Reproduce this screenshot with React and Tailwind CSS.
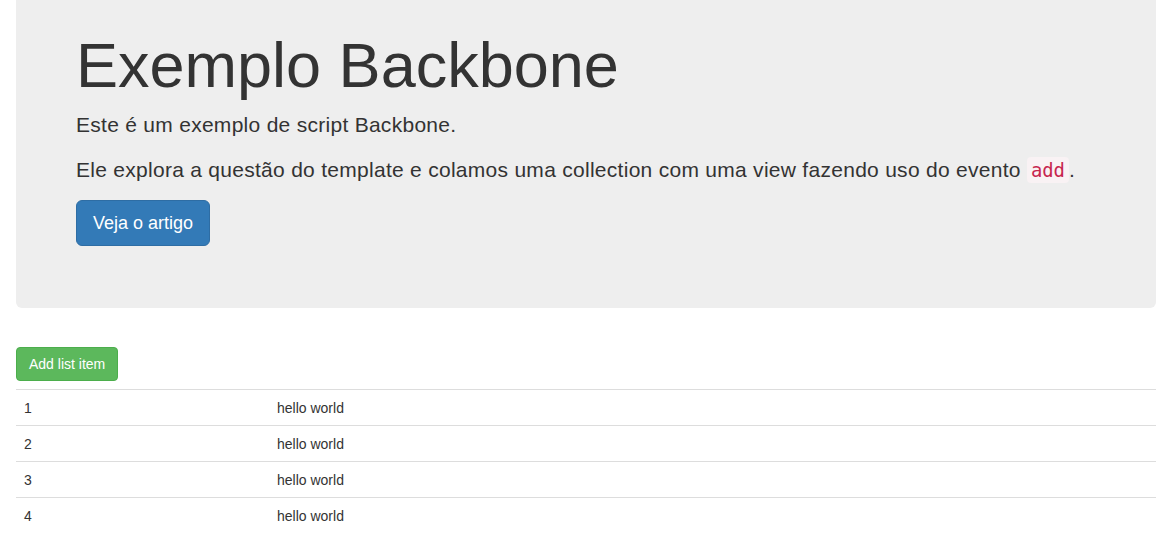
import React from "react";

const rows = [1, 2, 3, 4];

const App = () => {
    return (
        <div className="min-h-screen bg-white text-[#333] font-['Liberation_Sans',Arial,sans-serif] text-[14px] leading-[20px]">
            <div className="ml-4 w-[1140px] bg-[#eee] rounded-b-[6px] px-[60px] pt-[31px] pb-[47px]">
                <h1 className="text-[63px] leading-[1.1] mb-[10px] font-normal">Exemplo Backbone</h1>
                <p className="text-[21px] leading-[30px] mb-[15px] tracking-[0.28px]">Este é um exemplo de script Backbone.</p>
                <p className="text-[21px] leading-[30px] mb-[15px] tracking-[0.28px]">
                    Ele explora a questão do template e colamos uma collection com uma view fazendo uso do evento{" "}
                    <code className="font-['DejaVu_Sans_Mono',monospace] tracking-normal text-[18.9px] text-[#c7254e] bg-[#f9f2f4] px-1 py-[2px] rounded">add</code>.
                </p>
                <div className="mb-[15px] h-[46px]">
                    <a className="inline-block bg-[#337ab7] border border-[#2e6da4] text-white rounded-[6px] px-4 py-[10px] text-[18px] leading-[24px]">
                        Veja o artigo
                    </a>
                </div>
            </div>

            <div className="ml-4 w-[1140px] mt-[39px]">
                <button className="bg-[#5cb85c] border border-[#4cae4c] text-white rounded px-3 py-[6px] text-[14px] leading-[20px]">
                    Add list item
                </button>
                <div className="mt-2">
                    {rows.map((n) => (
                        <div key={n} className="flex border-t border-[#ddd] h-[36px] items-center">
                            <div className="w-[253px] px-2">{n}</div>
                            <div className="px-2">hello world</div>
                        </div>
                    ))}
                </div>
            </div>
        </div>
    );
};

export default App;
